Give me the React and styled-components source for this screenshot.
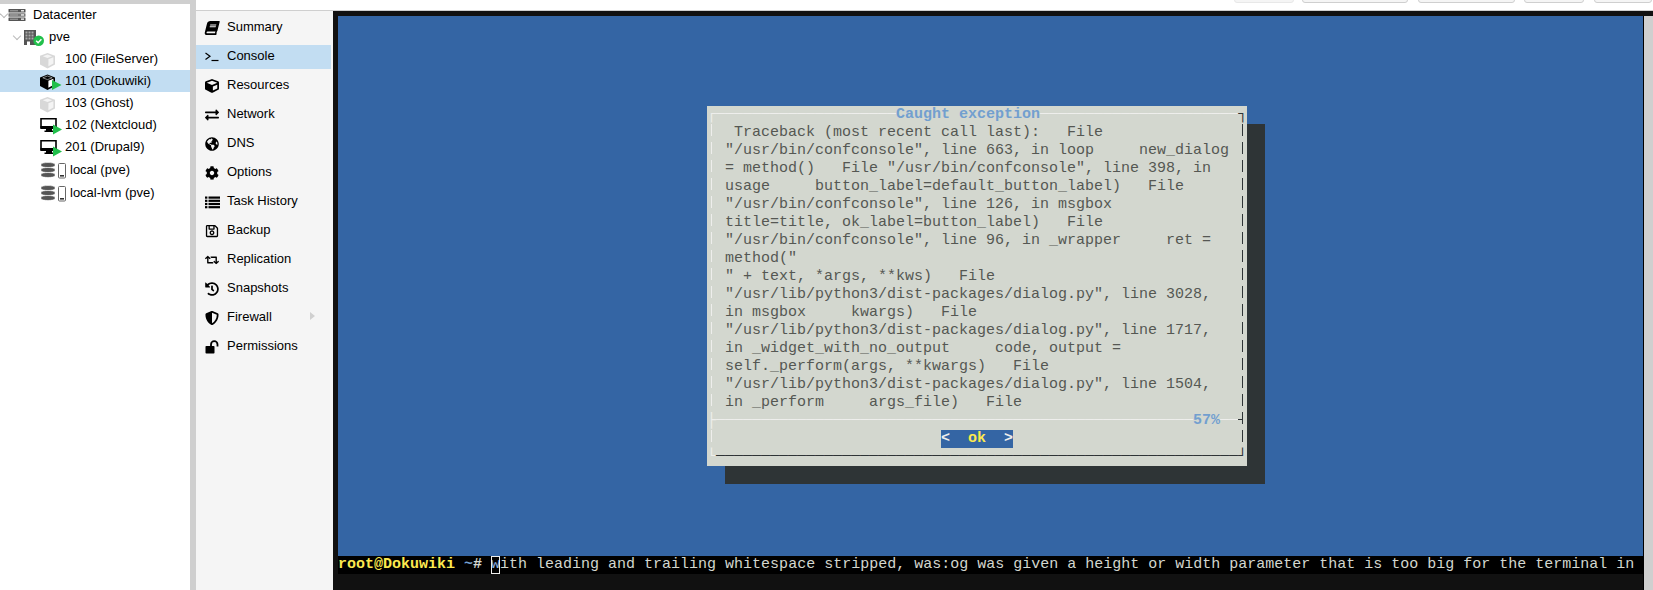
import React from 'react'
import styled, { createGlobalStyle } from 'styled-components'
import {
  FaBook, FaCube, FaExchangeAlt, FaGlobeAmericas, FaCog,
  FaRegSave, FaRetweet, FaHistory, FaShieldAlt,
} from 'react-icons/fa'

const GREEN = '#21bf4b'

const ServerIcon = () => (
  <svg width="18" height="14" viewBox="0 0 18 14">
    {[1, 5.2, 9.4].map(y => (
      <g key={y}>
        <rect x="0.5" y={y} width="17" height="3.6" rx="0.6" fill={y === 5.2 ? '#777' : '#555'} />
        <rect x="2" y={y + 1.3} width="8" height="1" fill="#aaa" />
        <rect x="13" y={y + 1} width="3" height="1.5" fill="#e4e4e4" />
      </g>
    ))}
  </svg>
)

const NodeIcon = () => (
  <svg width="22" height="20" viewBox="0 0 22 20">
    <rect x="0" y="3" width="12" height="15" fill="#555" />
    {[4.5, 7.5, 10.5].map(y => [1.5, 4.5, 7.5].map(x => (
      <rect key={`${x}-${y}`} x={x} y={y} width="2" height="2" fill="#aaa" />
    )))}
    <rect x="3" y="14.5" width="3" height="3.5" fill="#fff" />
    <circle cx="14.7" cy="13.7" r="5.3" fill={GREEN} />
    <path d="M12.2 13.8l1.9 1.9 3.3-3.5" fill="none" stroke="#fff" strokeWidth="1.5" />
  </svg>
)

const CubeIcon = ({ running }) => (
  <svg width="24" height="20" viewBox="0 0 24 20">
    {running ? (
      <>
        <path d="M7.5 3.6l7.5 2.8v8.6l-7.5 4-7.5-4V6.400z" fill="#000" />
        <path d="M8.400 9.800l5-2v6.300l-5 2.700z" fill="#fff" />
        <path d="M2.800 6.800L7.500 5l4.700 1.800-4.700 1.800z" fill="#000" stroke="#fff" strokeWidth="0.5" />
        <path d="M12 9l9.500 5L12 19z" fill={GREEN} />
      </>
    ) : (
      <>
        <path d="M7.500 4l7.500 2.800v8.600l-7.500 4-7.500-4V6.800z" fill="#d8d8d8" />
        <path d="M8.400 10.200l5-2v6.300l-5 2.700z" fill="#f4f4f4" />
        <path d="M2.800 7.200l4.700-1.800 4.700 1.800-4.700 1.800z" fill="#f4f4f4" />
      </>
    )}
  </svg>
)

const MonitorIcon = () => (
  <svg width="24" height="20" viewBox="0 0 24 20">
    <path d="M1 3.800h15v9H1z" fill="#fff" stroke="#000" strokeWidth="1.600" />
    <path d="M0.500 11h16v3h-16z" fill="#000" />
    <path d="M6 14h6v1.500h2V17H4.500v-1.500H6z" fill="#000" />
    <path d="M13 9.500l9 5-9 5z" fill={GREEN} />
  </svg>
)

const StorageIcon = () => (
  <svg width="26" height="18" viewBox="0 0 26 18">
    {[12, 7, 2].map(y => (
      <path key={y} d={`M0 ${y + 1.4}c0-2.500 14-2.500 14 0v1.200c0 2.500-14 2.500-14 0z`} fill="#555" stroke="#fff" strokeWidth="0.6" />
    ))}
    <rect x="17.500" y="2.500" width="7" height="14.500" rx="1" fill="#fff" stroke="#666" />
    <rect x="19" y="14" width="4" height="1.600" fill="#333" />
  </svg>
)

const TerminalIcon = () => (
  <svg width="14" height="14" viewBox="0 0 14 14">
    <path d="M0.500 3l4.500 3.200-4.500 3.200" fill="none" stroke="#000" strokeWidth="1.200" />
    <path d="M6.500 10.500h7" fill="none" stroke="#000" strokeWidth="1.200" />
  </svg>
)

const ListIcon = () => (
  <svg width="15" height="14" viewBox="0 0 15 14">
    {[1.500, 4.700, 7.900, 11.100].map(y => (
      <g key={y} fill="#000">
        <rect x="0" y={y} width="2.400" height="2.200" />
        <rect x="3.500" y={y} width="11.500" height="2.200" />
      </g>
    ))}
  </svg>
)

const UnlockIcon = () => (
  <svg width="15" height="14" viewBox="0 0 15 14">
    <rect x="0.500" y="6" width="9" height="7.500" rx="0.800" fill="#000" />
    <path d="M6 6.500V4.400a3 3 0 0 1 6.500 0V6.500" fill="none" stroke="#000" strokeWidth="1.800" />
  </svg>
)

const TREE = [
  { label: 'Datacenter', pad: 8, slot: 25, arrow: 1, icon: <ServerIcon /> },
  { label: 'pve', pad: 24, slot: 25, arrow: 14, icon: <NodeIcon /> },
  { label: '100 (FileServer)', pad: 40, slot: 25, icon: <CubeIcon /> },
  { label: '101 (Dokuwiki)', pad: 40, slot: 25, icon: <CubeIcon running />, selected: true },
  { label: '103 (Ghost)', pad: 40, slot: 25, icon: <CubeIcon /> },
  { label: '102 (Nextcloud)', pad: 40, slot: 25, icon: <MonitorIcon /> },
  { label: '201 (Drupal9)', pad: 40, slot: 25, icon: <MonitorIcon /> },
  { label: 'local (pve)', pad: 41, slot: 29, icon: <StorageIcon />, tall: true },
  { label: 'local-lvm (pve)', pad: 41, slot: 29, icon: <StorageIcon />, tall: true },
]

const NAV = [
  { label: 'Summary', icon: <BookIcon /> },
  { label: 'Console', icon: <TerminalIcon />, selected: true },
  { label: 'Resources', icon: <FaCube /> },
  { label: 'Network', icon: <FaExchangeAlt /> },
  { label: 'DNS', icon: <FaGlobeAmericas /> },
  { label: 'Options', icon: <FaCog /> },
  { label: 'Task History', icon: <ListIcon /> },
  { label: 'Backup', icon: <FaRegSave /> },
  { label: 'Replication', icon: <FaRetweet /> },
  { label: 'Snapshots', icon: <FaHistory /> },
  { label: 'Firewall', icon: <FaShieldAlt />, more: true },
  { label: 'Permissions', icon: <UnlockIcon /> },
]

function BookIcon() {
  return <TiltedBook />
}

const BUTTONS = [
  { w: 60, ml: 0, off: true },
  { w: 106, ml: 8 },
  { w: 97, ml: 10 },
  { w: 60, ml: 9 },
  { w: 58, ml: 10 },
]

const TRACE = [
  ' Traceback (most recent call last):   File',
  '"/usr/bin/confconsole", line 663, in loop     new_dialog',
  '= method()   File "/usr/bin/confconsole", line 398, in',
  'usage     button_label=default_button_label)   File',
  '"/usr/bin/confconsole", line 126, in msgbox',
  'title=title, ok_label=button_label)   File',
  '"/usr/bin/confconsole", line 96, in _wrapper     ret =',
  'method("',
  '" + text, *args, **kws)   File',
  '"/usr/lib/python3/dist-packages/dialog.py", line 3028,',
  'in msgbox     kwargs)   File',
  '"/usr/lib/python3/dist-packages/dialog.py", line 1717,',
  'in _widget_with_no_output     code, output =',
  'self._perform(args, **kwargs)   File',
  '"/usr/lib/python3/dist-packages/dialog.py", line 1504,',
  'in _perform     args_file)   File',
]

const App = () => {
  return (
    <Page>
      <GlobalStyle />
      <Tree>
        {TREE.map(row => (
          <TreeRow key={row.label} $pad={row.pad} $selected={row.selected} $tall={row.tall}>
            {row.arrow !== undefined && <Chevron $left={row.arrow} />}
            <TreeIcon $w={row.slot}>{row.icon}</TreeIcon>
            <span>{row.label}</span>
          </TreeRow>
        ))}
      </Tree>
      <Main>
        <Toolbar>
          {BUTTONS.map((b, i) => (
            <ToolButton key={i} $w={b.w} $ml={b.ml} $off={b.off} />
          ))}
        </Toolbar>
        <Content>
          <Nav>
            {NAV.map(item => (
              <NavItem key={item.label} $selected={item.selected}>
                <NavIcon>{item.icon}</NavIcon>
                <NavLabel>{item.label}</NavLabel>
                {item.more && <MoreArrow />}
              </NavItem>
            ))}
          </Nav>
          <Console>
            <Term>
              <Screen>
                <Dialog>
                  <Line>
                    <Light>┌{'─'.repeat(20)}</Light>
                    <Title>Caught exception</Title>
                    <Light>{'─'.repeat(22)}</Light>
                    <Dark>┐</Dark>
                  </Line>
                  {TRACE.map((text, i) => (
                    <TextLine key={i}>
                      <FrameBar $light />
                      <LineText>{text}</LineText>
                      <FrameBar />
                    </TextLine>
                  ))}
                  <SeparatorLine>
                    <span>
                      <Light>├{'─'.repeat(53)}</Light>
                      <Title>57%</Title>
                      <Light>──</Light>
                    </span>
                    <FrameTee />
                  </SeparatorLine>
                  <TextLine>
                    <FrameBar $light />
                    <ButtonRow>
                      <OkButton><b>{'<'}</b>{'  '}<em>ok</em>{'  '}<b>{'>'}</b></OkButton>
                    </ButtonRow>
                    <FrameBar />
                  </TextLine>
                  <Line>
                    <Light>└</Light><Dark>{'─'.repeat(58)}┘</Dark>
                  </Line>
                </Dialog>
              </Screen>
              <PromptRow>
                <Yellow>root@Dokuwiki</Yellow>
                <Tilde> ~</Tilde>
                <Hash>#</Hash>{' '}
                <Cursor>w</Cursor>
                ith leading and trailing whitespace stripped, was:og was given a height or width parameter that is too big for the terminal in
              </PromptRow>
              <TermFoot />
            </Term>
            <Gutter />
          </Console>
        </Content>
      </Main>
    </Page>
  )
}

export default App

const GlobalStyle = createGlobalStyle`
  html, body {
    margin: 0;
    height: 590px;
    overflow: hidden;
  }
`;

const Page = styled.div`
  display: flex;
  width: 1653px;
  height: 590px;
  background: #cfcfcf;
  font-family: "Liberation Sans", Arial, sans-serif;
  font-size: 13px;
  color: #000;
`;

const Tree = styled.div`
  width: 190px;
  margin: 4px 6px 0 0;
  background: #fff;
  flex-shrink: 0;
`;

const TreeRow = styled.div`
  position: relative;
  display: flex;
  align-items: center;
  height: ${p => (p.$tall ? 23 : 22)}px;
  padding-left: ${p => p.$pad}px;
  background: ${p => (p.$selected ? '#c2ddf2' : 'transparent')};
  span:last-child {
    padding-bottom: ${p => (p.$tall ? 0 : 2)}px;
  }
`;

const TreeIcon = styled.div`
  display: flex;
  width: ${p => p.$w}px;
  flex-shrink: 0;
`;

const Chevron = styled.i`
  position: absolute;
  left: ${p => p.$left}px;
  top: 7px;
  width: 5px;
  height: 5px;
  border-right: 1px solid #bbb;
  border-bottom: 1px solid #bbb;
  transform: rotate(45deg);
`;

const Main = styled.div`
  flex: 1;
  display: flex;
  flex-direction: column;
  min-width: 0;
`;

const Toolbar = styled.div`
  height: 3px;
  flex-shrink: 0;
  display: flex;
  justify-content: flex-end;
  align-items: flex-end;
  padding: 0 1px 7px 0;
  overflow: hidden;
  background: #fff;
  border-bottom: 1px solid #cfcfcf;
`;

const ToolButton = styled.div`
  flex-shrink: 0;
  width: ${p => p.$w}px;
  height: 20px;
  margin-left: ${p => p.$ml}px;
  box-sizing: border-box;
  border: 1px solid ${p => (p.$off ? '#e8e8e8' : '#cfcfcf')};
  border-radius: 3px;
  background: #f5f5f5;
`;

const Content = styled.div`
  flex: 1;
  display: flex;
  min-height: 0;
`;

const Nav = styled.div`
  width: 137px;
  flex-shrink: 0;
  padding: 5px 2px 0 0;
  box-sizing: border-box;
  background: #f5f5f5;
  display: flex;
  flex-direction: column;
  gap: 5px;
`;

const NavItem = styled.div`
  position: relative;
  display: flex;
  align-items: center;
  height: 24px;
  flex-shrink: 0;
  padding-left: 8px;
  gap: 7px;
  background: ${p => (p.$selected ? '#c2ddf2' : 'transparent')};
`;

const NavIcon = styled.div`
  display: flex;
  justify-content: center;
  width: 16px;
  padding-bottom: 1px;
  font-size: 14px;
`;

const NavLabel = styled.span`
  padding-bottom: 3px;
`;

const TiltedBook = styled(FaBook)`
  transform: skewX(-14deg);
`;

const MoreArrow = styled.i`
  position: absolute;
  right: 16px;
  top: 6px;
  border-left: 5px solid #d0d0d0;
  border-top: 4px solid transparent;
  border-bottom: 4px solid transparent;
`;

const Console = styled.div`
  flex: 1;
  display: flex;
  padding: 5px 0 0 5px;
  background: #111;
  min-width: 0;
`;

const Term = styled.div`
  width: 1305px;
  flex-shrink: 0;
  border-right: 1px solid #000;
  display: flex;
  flex-direction: column;
  font-family: "Liberation Mono", "Courier New", monospace;
  font-size: 15px;
  line-height: 18px;
  white-space: pre;
`;

const Gutter = styled.div`
  flex: 1;
  background: #cfcfcf;
`;

const Screen = styled.div`
  height: 540px;
  padding: 90px 0 0 369px;
  box-sizing: border-box;
  background: #3465a4;
`;

const Dialog = styled.div`
  width: 540px;
  height: 360px;
  background: #d3d7cf;
  color: #555753;
  box-shadow: 18px 18px 0 #2e3436;
`;

const Line = styled.div`
  height: 18px;
`;

const TextLine = styled.div`
  display: grid;
  grid-template-columns: 9px 1fr 9px;
  height: 18px;
`;

const SeparatorLine = styled.div`
  display: grid;
  grid-template-columns: 531px 9px;
  height: 18px;
  overflow: hidden;
`;

/* dashed side of the curses frame: 12px of line in each 18px row */
const FrameBar = styled.i`
  display: block;
  height: 18px;
  background: linear-gradient(${p => (p.$light ? '#eeeeec' : '#2e3436')}, ${p => (p.$light ? '#eeeeec' : '#2e3436')}) 4px 0 / 1px 12px no-repeat;
`;

const FrameTee = styled.i`
  display: block;
  height: 18px;
  background:
    linear-gradient(#2e3436, #2e3436) 4px 0 / 1px 12px no-repeat,
    linear-gradient(#2e3436, #2e3436) 0 7px / 5px 1px no-repeat;
`;

const LineText = styled.span`
  padding-left: 9px;
`;

const ButtonRow = styled.div`
  padding-left: 225px;
`;

const Light = styled.span`
  color: #eeeeec;
`;

const Dark = styled.span`
  color: #2e3436;
`;

const Title = styled.span`
  color: #729fcf;
  font-weight: bold;
`;

const OkButton = styled.span`
  display: block;
  width: 72px;
  background: #3465a4;
  color: #eeeeec;
  font-weight: bold;
  b {
    font-weight: bold;
  }
  em {
    font-style: normal;
    color: #fce94f;
  }
`;

const PromptRow = styled.div`
  height: 18px;
  background: #000;
  color: #d3d7cf;
  overflow: hidden;
`;

const Yellow = styled.span`
  color: #fce94f;
  font-weight: bold;
`;

const Tilde = styled.span`
  color: #729fcf;
  font-weight: bold;
`;

const Hash = styled.span`
  color: #d3d7cf;
  font-weight: bold;
`;

const Cursor = styled.span`
  display: inline-block;
  width: 9px;
  height: 18px;
  box-sizing: border-box;
  outline: 1px solid #eeeeec;
  outline-offset: -1px;
  color: #8fb4e0;
  vertical-align: top;
`;

const TermFoot = styled.div`
  flex: 1;
  background: #111;
`;
